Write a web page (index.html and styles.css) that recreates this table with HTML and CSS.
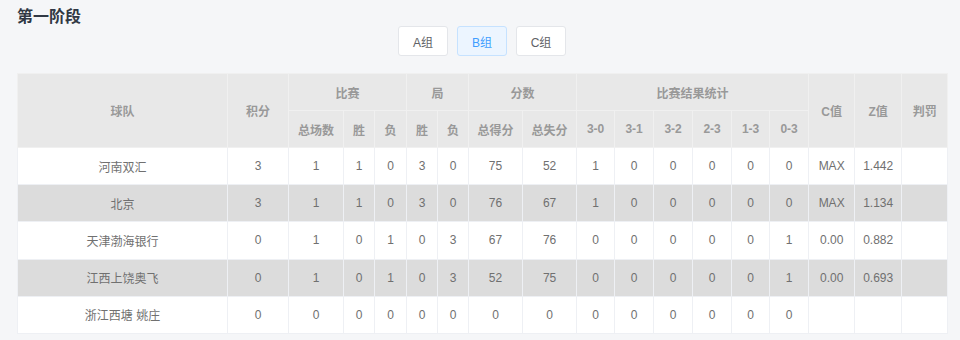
FILE: index.html
```html
<!DOCTYPE html>
<html lang="zh">
<head>
<meta charset="utf-8">
<title>第一阶段</title>
<link rel="stylesheet" href="styles.css">
</head>
<body>
<div class="page">
  <h2 class="title">第一阶段</h2>
  <div class="tabs">
    <button class="tab">A组</button>
    <button class="tab active">B组</button>
    <button class="tab">C组</button>
  </div>
  <table class="rank">
    <colgroup>
      <col style="width:210px"><col style="width:61px"><col style="width:55px">
      <col style="width:31px"><col style="width:32px"><col style="width:31px"><col style="width:31px">
      <col style="width:54px"><col style="width:54px">
      <col style="width:38px"><col style="width:39px"><col style="width:39px"><col style="width:39px"><col style="width:38px"><col style="width:39px">
      <col style="width:46px"><col style="width:47px"><col style="width:46px">
    </colgroup>
    <thead>
      <tr>
        <th rowspan="2">球队</th>
        <th rowspan="2">积分</th>
        <th colspan="3">比赛</th>
        <th colspan="2">局</th>
        <th colspan="2">分数</th>
        <th colspan="6">比赛结果统计</th>
        <th rowspan="2">C值</th>
        <th rowspan="2">Z值</th>
        <th rowspan="2">判罚</th>
      </tr>
      <tr>
        <th>总场数</th><th>胜</th><th>负</th><th>胜</th><th>负</th>
        <th>总得分</th><th>总失分</th>
        <th>3-0</th><th>3-1</th><th>3-2</th><th>2-3</th><th>1-3</th><th>0-3</th>
      </tr>
    </thead>
    <tbody>
      <tr><td>河南双汇</td><td>3</td><td>1</td><td>1</td><td>0</td><td>3</td><td>0</td><td>75</td><td>52</td><td>1</td><td>0</td><td>0</td><td>0</td><td>0</td><td>0</td><td>MAX</td><td>1.442</td><td></td></tr>
      <tr class="alt"><td>北京</td><td>3</td><td>1</td><td>1</td><td>0</td><td>3</td><td>0</td><td>76</td><td>67</td><td>1</td><td>0</td><td>0</td><td>0</td><td>0</td><td>0</td><td>MAX</td><td>1.134</td><td></td></tr>
      <tr><td>天津渤海银行</td><td>0</td><td>1</td><td>0</td><td>1</td><td>0</td><td>3</td><td>67</td><td>76</td><td>0</td><td>0</td><td>0</td><td>0</td><td>0</td><td>1</td><td>0.00</td><td>0.882</td><td></td></tr>
      <tr class="alt"><td>江西上饶奥飞</td><td>0</td><td>1</td><td>0</td><td>1</td><td>0</td><td>3</td><td>52</td><td>75</td><td>0</td><td>0</td><td>0</td><td>0</td><td>0</td><td>1</td><td>0.00</td><td>0.693</td><td></td></tr>
      <tr><td>浙江西塘 姚庄</td><td>0</td><td>0</td><td>0</td><td>0</td><td>0</td><td>0</td><td>0</td><td>0</td><td>0</td><td>0</td><td>0</td><td>0</td><td>0</td><td>0</td><td></td><td></td><td></td></tr>
    </tbody>
  </table>
</div>
</body>
</html>
```
FILE: styles.css
```css
html, body {
  margin: 0;
  padding: 0;
  background: #f5f6f8;
}
body {
  font-family: "Liberation Sans", "Noto Sans CJK SC", sans-serif;
  font-size: 12px;
  color: #666;
}
.page {
  padding: 8px 13px 0 17px;
}
.title {
  margin: 0;
  font-size: 16px;
  line-height: 18px;
  font-weight: bold;
  color: #303844;
}
.tabs {
  display: flex;
  justify-content: center;
  gap: 9px;
}
.tab {
  width: 50px;
  height: 30px;
  padding: 0;
  border: 1px solid #e4e6ea;
  border-radius: 3px;
  background: #fff;
  color: #606266;
  font-family: inherit;
  font-size: 12px;
}
.tab.active {
  background: #ecf5ff;
  border-color: #c6e2ff;
  color: #409eff;
}
.rank {
  margin-top: 17px;
  width: 930px;
  table-layout: fixed;
  border-collapse: collapse;
  background: #fff;
}
.rank th, .rank td {
  border: 1px solid #eef0f4;
  text-align: center;
  padding: 0;
  font-size: 12px;
}
.rank th {
  background: #e8e8e8;
  color: #999;
  font-weight: bold;
  height: 36px;
  border-color: #f0f0f0;
}
.rank td {
  height: 36px;
  color: #707070;
}
.rank tbody tr td {
  height: 36.2px;
}
.rank tr.alt td {
  background: #dcdcdc;
}
```
